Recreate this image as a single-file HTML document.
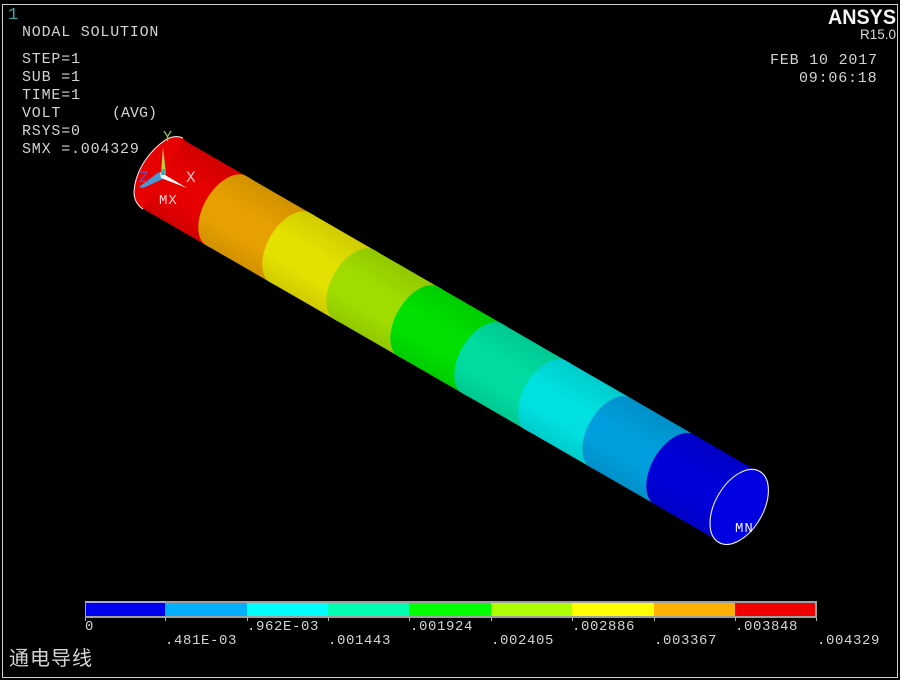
<!DOCTYPE html>
<html><head><meta charset="utf-8">
<style>
html,body{margin:0;padding:0;background:#000;}
body{width:900px;height:680px;overflow:hidden;position:relative;}
svg{position:absolute;left:0;top:0;}
text{font-family:"Liberation Mono",monospace;font-size:15px;fill:#d4d4d4;letter-spacing:.8px;}
.leg{font-size:14px;letter-spacing:.6px;}
</style></head><body>
<svg width="900" height="680" viewBox="0 0 900 680">
<defs>
<linearGradient id="sh" x1="0" y1="-40" x2="0" y2="40" gradientUnits="userSpaceOnUse">
<stop offset="0" stop-color="#000" stop-opacity=".09"/>
<stop offset=".4" stop-color="#000" stop-opacity="0"/>
<stop offset=".7" stop-color="#000" stop-opacity="0"/>
<stop offset="1" stop-color="#000" stop-opacity=".09"/>
</linearGradient>
<clipPath id="body"><rect x="-10" y="-40" width="700" height="80"/></clipPath>
</defs>
<rect x="2.5" y="4.5" width="895" height="673" fill="none" stroke="#d0d0d0" stroke-width="1"/>
<path d="M183,138C176,135 168,137 160,144C147,155 135,172 134,192C134,200 138,206 143,209L200,200L200,160Z" fill="#e60000"/>
<g transform="translate(163.3,174.4) rotate(30)">
<g clip-path="url(#body)">
<path d="M0,-40H73.9V40H0Z" fill="#e60000"/>
<path d="M73.9,-40H147.8V40H73.9Z" fill="#e6a000"/><ellipse cx="73.9" cy="0" rx="24" ry="40.5" fill="#e6a000"/>
<path d="M147.8,-40H221.7V40H147.8Z" fill="#e4e000"/><ellipse cx="147.8" cy="0" rx="24" ry="40.5" fill="#e4e000"/>
<path d="M221.7,-40H295.6V40H221.7Z" fill="#a0dc00"/><ellipse cx="221.7" cy="0" rx="24" ry="40.5" fill="#a0dc00"/>
<path d="M295.6,-40H369.5V40H295.6Z" fill="#00e000"/><ellipse cx="295.6" cy="0" rx="24" ry="40.5" fill="#00e000"/>
<path d="M369.5,-40H443.4V40H369.5Z" fill="#00dca0"/><ellipse cx="369.5" cy="0" rx="24" ry="40.5" fill="#00dca0"/>
<path d="M443.4,-40H517.3V40H443.4Z" fill="#00e0e0"/><ellipse cx="443.4" cy="0" rx="24" ry="40.5" fill="#00e0e0"/>
<path d="M517.3,-40H591.2V40H517.3Z" fill="#009edc"/><ellipse cx="517.3" cy="0" rx="24" ry="40.5" fill="#009edc"/>
<path d="M591.2,-40H665V40H591.2Z" fill="#0000d8"/><ellipse cx="591.2" cy="0" rx="24" ry="40.5" fill="#0000d8"/>
</g>
<path d="M0,-40H665V40H0Z" fill="url(#sh)"/>
<ellipse cx="665" cy="0" rx="24" ry="41" fill="#0000e0" stroke="#f0f0f0" stroke-width="1.1"/>
</g>
<path d="M183,138C176,135 168,137 160,144C147,155 135,172 134,192C134,200 138,206 143,209" fill="none" stroke="#f0e0e0" stroke-width="1.1"/>
<path d="M161,174L163,147L166,174Z" fill="#c0d040"/>
<path d="M159,172L139,187L143,188L165,178Z" fill="#4898d8"/>
<path d="M160,172L187,188L161,178Z" fill="#fff"/>
<rect x="161" y="169" width="5" height="6" fill="#40b0a0"/>
<text x="163" y="141" style="fill:#90c850;font-size:15px;letter-spacing:0">Y</text>
<text x="186" y="182" style="fill:#ffc8c8;font-size:16px;letter-spacing:0">X</text>
<text x="139" y="182" style="fill:#7050c0;font-size:16px;letter-spacing:0">Z</text>
<text x="159" y="204" style="fill:#ffd0d0;font-size:14px;letter-spacing:1px">MX</text>
<text x="735" y="532" style="fill:#f0f0f0;font-size:14px;letter-spacing:1px">MN</text>

<text x="8" y="19" style="fill:#3fa8a8;font-size:17px">1</text>
<text x="22" y="36">NODAL SOLUTION</text>
<text x="22" y="63">STEP=1</text>
<text x="22" y="81">SUB =1</text>
<text x="22" y="99">TIME=1</text>
<text x="22" y="117">VOLT</text>
<text x="112" y="117" style="letter-spacing:0">(AVG)</text>
<text x="22" y="135">RSYS=0</text>
<text x="22" y="153">SMX =.004329</text>
<text x="828" y="24" textLength="68" lengthAdjust="spacingAndGlyphs" style="font-family:'Liberation Sans',sans-serif;font-weight:bold;font-size:21.5px;fill:#f4f4f4;letter-spacing:0">ANSYS</text>
<text x="860" y="39" textLength="36" lengthAdjust="spacingAndGlyphs" style="font-family:'Liberation Sans',sans-serif;font-size:13.5px;fill:#d8d8d8;letter-spacing:0">R15.0</text>
<text x="770" y="64">FEB 10 2017</text>
<text x="799" y="82">09:06:18</text>

<rect x="85" y="601" width="732" height="17" fill="#a0a0a0"/>
<rect x="85" y="601" width="80" height="2" fill="#a8a8e8"/>
<rect x="86" y="603" width="79" height="13" fill="#0000f0"/>
<rect x="165" y="603" width="82" height="13" fill="#00b0ff"/>
<rect x="247" y="603" width="81" height="13" fill="#00ffff"/>
<rect x="328" y="603" width="81" height="13" fill="#00ffb0"/>
<rect x="409" y="603" width="82" height="13" fill="#00ff00"/>
<rect x="491" y="603" width="81" height="13" fill="#b0ff00"/>
<rect x="572" y="603" width="82" height="13" fill="#ffff00"/>
<rect x="654" y="603" width="81" height="13" fill="#ffb000"/>
<rect x="735" y="603" width="80" height="13" fill="#f00000"/>
<g fill="#b0b0b0">
<rect x="85" y="618" width="1" height="3"/><rect x="165" y="618" width="1" height="3"/><rect x="247" y="618" width="1" height="3"/><rect x="328" y="618" width="1" height="3"/><rect x="409" y="618" width="1" height="3"/><rect x="491" y="618" width="1" height="3"/><rect x="572" y="618" width="1" height="3"/><rect x="654" y="618" width="1" height="3"/><rect x="735" y="618" width="1" height="3"/><rect x="816" y="618" width="1" height="3"/>
</g>
<text class="leg" x="85" y="630">0</text>
<text class="leg" x="247" y="630">.962E-03</text>
<text class="leg" x="410" y="630">.001924</text>
<text class="leg" x="572" y="630">.002886</text>
<text class="leg" x="735" y="630">.003848</text>
<text class="leg" x="165" y="644">.481E-03</text>
<text class="leg" x="328" y="644">.001443</text>
<text class="leg" x="491" y="644">.002405</text>
<text class="leg" x="654" y="644">.003367</text>
<text class="leg" x="817" y="644">.004329</text>
<text x="9" y="665" style="font-family:'Liberation Sans','Noto Sans CJK SC',sans-serif;font-size:20px;fill:#d4d4d4;letter-spacing:1px">通电导线</text>
</svg>
</body></html>
